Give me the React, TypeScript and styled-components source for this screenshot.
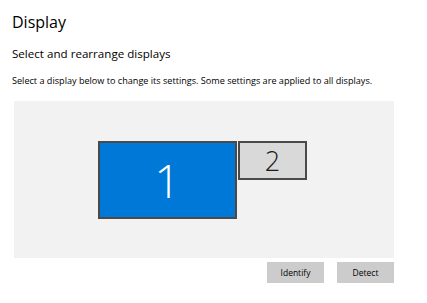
import React from 'react';
import styled, {createGlobalStyle} from 'styled-components';

const Global = createGlobalStyle`
  html, body {
    margin: 0;
    background: #fff;
  }
  body {
    font-family: "Open Sans", "Noto Sans", sans-serif;
    color: #000;
  }
`

const Page = styled.div`
  width: 427px;
  height: 303px;
  padding: 0 0 0 12px;
  box-sizing: border-box;
  overflow: hidden;
`

const Title = styled.h1`
  margin: 0;
  padding-top: 10px;
  font-size: 16px;
  font-weight: 400;
  line-height: 24px;
`

const Subtitle = styled.h2`
  margin: 12px 0 0;
  font-size: 11.6px;
  font-weight: 400;
  line-height: 16px;
`

const Description = styled.p`
  margin: 13px 0 0;
  font-size: 9.1px;
  line-height: 12px;
`

const Arrangement = styled.div`
  position: relative;
  margin: 14px 0 0 2px;
  width: 380px;
  height: 157px;
  background: #f2f2f2;
`

const Monitor = styled.div<{$active?: boolean}>`
  position: absolute;
  box-sizing: border-box;
  border: 2px solid #4a4a4a;
  background: ${p => p.$active ? '#0078d7' : '#d9d9d9'};
  color: ${p => p.$active ? '#fff' : '#1a1a1a'};
  display: flex;
  align-items: center;
  justify-content: center;
  font-weight: 300;
`

const Actions = styled.div`
  display: flex;
  justify-content: flex-end;
  gap: 13px;
  width: 380px;
  margin: 4px 0 0 2px;
`

const Button = styled.button`
  width: 57px;
  height: 21px;
  border: none;
  padding: 0;
  background: #cccccc;
  font-family: inherit;
  font-size: 8.5px;
  color: #000;
`

const monitors = [
    {id: 1, left: 84, top: 40, width: 139, height: 78, size: 46, active: true},
    {id: 2, left: 224, top: 40, width: 69, height: 39, size: 27, active: false},
]

const App = () => {
    return (
        <Page>
            <Global/>
            <Title>Display</Title>
            <Subtitle>Select and rearrange displays</Subtitle>
            <Description>
                Select a display below to change its settings. Some settings are applied to all displays.
            </Description>
            <Arrangement>
                {monitors.map(m =>
                    <Monitor
                        key={m.id}
                        $active={m.active}
                        style={{left: m.left, top: m.top, width: m.width, height: m.height, fontSize: m.size}}>
                        {m.id}
                    </Monitor>
                )}
            </Arrangement>
            <Actions>
                <Button>Identify</Button>
                <Button>Detect</Button>
            </Actions>
        </Page>
    )
}

export default App;
